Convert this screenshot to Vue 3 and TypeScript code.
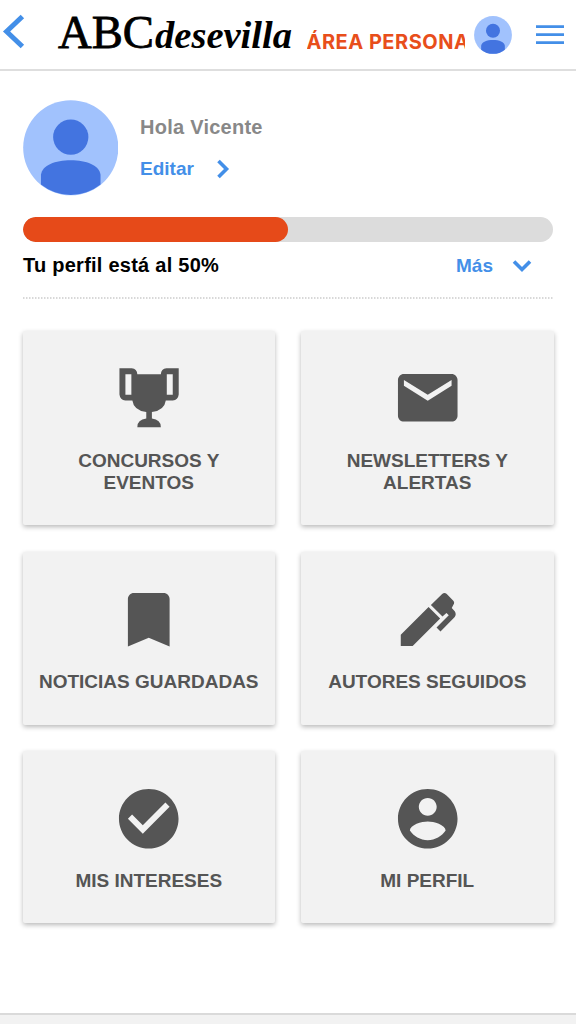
<script setup lang="ts">
import { ref } from 'vue'

interface Tile {
  label: string
  viewBox: string
  path: string
}

const progress = ref<number>(50)

const rows: { name: string; tiles: Tile[] }[] = [
  {
    name: 'tall',
    tiles: [
      {
        label: 'CONCURSOS Y EVENTOS',
        viewBox: '307.5 126 216 216',
        path: 'M327 145H364Q380 147 381 163H452Q453 147 469 145H506V224Q504 241 488 242H467Q463 272 425 277V297Q452 300 452 323H381Q381 300 408 297V277Q370 272 366 242H345Q329 241 327 224ZM345 163V225H363V163ZM470 163V225H488V163Z',
      },
      {
        label: 'NEWSLETTERS Y ALERTAS',
        viewBox: '0 0 24 24',
        path: 'M20 4H4c-1.1 0-2 .9-2 2v12c0 1.1.9 2 2 2h16c1.1 0 2-.9 2-2V6c0-1.1-.9-2-2-2zm0 4l-8 5-8-5V6l8 5 8-5v2z',
      },
    ],
  },
  {
    name: 'middle',
    tiles: [
      {
        label: 'NOTICIAS GUARDADAS',
        viewBox: '0 0 24 24',
        path: 'M17 3H7c-1.1 0-2 .9-2 2v16l7-3 7 3V5c0-1.1-.9-2-2-2z',
      },
      {
        label: 'AUTORES SEGUIDOS',
        viewBox: '304.5 130.5 216 216',
        path: 'M331 318V284L415 200L450 235L367 318ZM422 194L456 161Q463 155 470 161L489 180Q495 186 490 193L485 203L494 213Q500 222 494 230L451 274L439 262L476 225L469 218L457 229Z',
      },
    ],
  },
  {
    name: 'last',
    tiles: [
      {
        label: 'MIS INTERESES',
        viewBox: '0 0 24 24',
        path: 'M12 2C6.48 2 2 6.48 2 12s4.48 10 10 10 10-4.48 10-10S17.52 2 12 2zm-2 15l-5-5 1.41-1.41L10 14.17l7.59-7.59L19 8l-9 9z',
      },
      {
        label: 'MI PERFIL',
        viewBox: '0 0 24 24',
        path: 'M12 2C6.48 2 2 6.48 2 12s4.48 10 10 10 10-4.48 10-10S17.52 2 12 2zm0 3c1.66 0 3 1.34 3 3s-1.34 3-3 3-3-1.34-3-3 1.34-3 3-3zm0 14.2c-2.5 0-4.71-1.28-6-3.22.03-1.99 4-3.08 6-3.08s5.97 1.09 6 3.08c-1.29 1.94-3.5 3.22-6 3.22z',
      },
    ],
  },
]
</script>

<template>
  <div class="page">
    <header class="header">
      <svg class="back" viewBox="0 0 30 70">
        <path d="M22.4 16.5L6.6 31.5L22.4 46.5" />
      </svg>
      <svg class="logo" viewBox="0 0 240 70">
        <text class="logo-abc" x="2" y="48.3" textLength="96" lengthAdjust="spacingAndGlyphs">ABC</text>
        <text class="logo-city" x="99" y="48" textLength="137" lengthAdjust="spacingAndGlyphs">desevilla</text>
      </svg>
      <div class="section">ÁREA PERSONAL</div>
      <svg class="avatar-small" viewBox="38 30 287 287">
        <circle class="disc" cx="181.5" cy="173.5" r="143" />
        <circle class="person" cx="181.5" cy="141.5" r="53" />
        <path class="person" d="M92 284V255C95 226 135 211 181.500 211S268 226 271 255V284A143 143 0 0 1 92 284Z" />
      </svg>
      <svg class="menu" viewBox="0 0 28 22">
        <path d="M0 1.700H28M0 9.700H28M0 17.700H28" />
      </svg>
    </header>

    <main class="main">
      <section class="profile">
        <svg class="avatar" viewBox="38 30 287 287">
          <circle class="disc" cx="181.5" cy="173.5" r="143" />
          <circle class="person" cx="181.5" cy="141.5" r="53" />
          <path class="person" d="M92 284V255C95 226 135 211 181.500 211S268 226 271 255V284A143 143 0 0 1 92 284Z" />
        </svg>
        <div class="who">
          <div class="hello">Hola Vicente</div>
          <a class="edit">
            <span>Editar</span>
            <svg class="chev-right" viewBox="0 0 14 20"><path d="M2.500 2L10.500 10L2.500 18" /></svg>
          </a>
        </div>
      </section>

      <div class="track">
        <div class="bar" :style="{ width: progress + '%' }"></div>
      </div>
      <div class="status">
        <span class="status-text">Tu perfil está al {{ progress }}%</span>
        <a class="more">
          <span>Más</span>
          <svg class="chev-down" viewBox="0 0 20 14"><path d="M2 2.500L10 10.500L18 2.500" /></svg>
        </a>
      </div>
      <svg class="dots" viewBox="0 0 530 2"><path d="M0 1H530" /></svg>

      <div class="rows">
        <div v-for="row in rows" :key="row.name" class="row" :class="row.name">
          <a v-for="tile in row.tiles" :key="tile.label" class="tile">
            <svg class="tile-icon" :viewBox="tile.viewBox"><path :d="tile.path" fill-rule="evenodd" /></svg>
            <span class="tile-label">{{ tile.label }}</span>
          </a>
        </div>
      </div>
    </main>
    <footer class="footer"></footer>
  </div>
</template>

<style>
body {
  background: #fff;
}
</style>

<style scoped>
.page {
  width: 576px;
  height: 1024px;
  overflow: hidden;
  display: flex;
  flex-direction: column;
  background: #fff;
  font-family: "Liberation Sans", Arial, sans-serif;
  font-weight: 700;
}
.header {
  box-sizing: border-box;
  height: 71px;
  flex: none;
  display: flex;
  border-bottom: 2px solid #dedede;
}
svg {
  display: block;
  flex: none;
}
.back {
  width: 30px;
  height: 70px;
}
.back path {
  fill: none;
  stroke: #438fe8;
  stroke-width: 5;
}
.logo {
  width: 240px;
  height: 70px;
  margin-left: 26px;
}
.logo-abc {
  font: 400 45.5px "Liberation Serif", serif;
  stroke: #000;
  stroke-width: 0.8px;
}
.logo-city {
  font: italic 700 37px "Liberation Serif", serif;
}
.section {
  margin-left: 10.5px;
  width: 158.5px;
  height: 30px;
  margin-top: 26.5px;
  overflow: hidden;
  white-space: nowrap;
  font: 700 20px/30px Inter, sans-serif;
  letter-spacing: 0.5px;
  color: #e84e1b;
}
.avatar-small {
  width: 38px;
  height: 38px;
  margin: 16px 0 0 9px;
}
.disc {
  fill: #a1c2fd;
}
.person {
  fill: #4374e0;
}
.menu {
  width: 28px;
  height: 22px;
  margin: 25px 0 0 24px;
}
.menu path {
  stroke: #438fe8;
  stroke-width: 2.8;
}
.main {
  flex: none;
  height: 942px;
  box-sizing: border-box;
  padding: 29px 22.5px 0;
}
.profile {
  display: flex;
  height: 96px;
}
.avatar {
  width: 95.5px;
  height: 95.5px;
}
.who {
  margin-left: 22px;
  padding-top: 15px;
}
.hello {
  font-size: 20px;
  line-height: 25px;
  letter-spacing: 0.25px;
  color: #888;
}
.edit,
.more {
  display: flex;
  align-items: center;
  color: #438fe8;
  font-size: 19px;
  line-height: 24px;
}
.edit {
  margin-top: 17px;
}
.chev-right {
  width: 14px;
  height: 20px;
  margin-left: 22px;
}
.chev-right path,
.chev-down path {
  fill: none;
  stroke: #438fe8;
  stroke-width: 3.6;
}
.track {
  width: 530.5px;
  height: 25px;
  margin-top: 21px;
  border-radius: 13px;
  background: #dcdcdc;
  overflow: hidden;
}
.bar {
  height: 25px;
  border-radius: 13px;
  background: #e64a19;
}
.status {
  display: flex;
  justify-content: space-between;
  align-items: center;
  height: 24px;
  margin-top: 12px;
  padding-right: 22px;
}
.status-text {
  padding: 0 0 2px 0.5px;
  font-size: 20px;
  letter-spacing: 0.25px;
  color: #000;
}
.chev-down {
  width: 20px;
  height: 14px;
  margin-left: 18.5px;
}
.dots {
  width: 530px;
  height: 2px;
  margin-top: 19px;
}
.dots path {
  stroke: #ccc;
  stroke-width: 1.4;
  stroke-dasharray: 1.5 1.5;
}
.rows {
  margin-top: 32px;
  display: flex;
  flex-direction: column;
}
.row {
  display: grid;
  grid-template-columns: 252.5px 252.5px;
  gap: 26px;
}
.tall {
  height: 194px;
}
.middle {
  height: 173px;
  margin-top: 27px;
}
.last {
  height: 172px;
  margin-top: 26px;
}
.tile {
  box-sizing: border-box;
  display: flex;
  flex-direction: column;
  align-items: center;
  padding-top: 31px;
  background: #f2f2f2;
  border-radius: 2px;
  box-shadow: 0 2px 5px rgba(0, 0, 0, 0.28);
}
.middle .tile,
.last .tile {
  padding-top: 32px;
}
.tile-icon {
  width: 71.5px;
  height: 71.5px;
}
.tile-icon path {
  fill: #555;
}
.tile-label {
  max-width: 225px;
  margin-top: 16px;
  font-size: 19px;
  line-height: 22px;
  text-align: center;
  color: #555;
}
.middle .tile-label,
.last .tile-label {
  margin-top: 15.5px;
}
.tall .tile-label {
  max-width: 170px;
}
.footer {
  flex: 1;
  border-top: 2px solid #dadada;
  background: #f2f2f2;
}
</style>
